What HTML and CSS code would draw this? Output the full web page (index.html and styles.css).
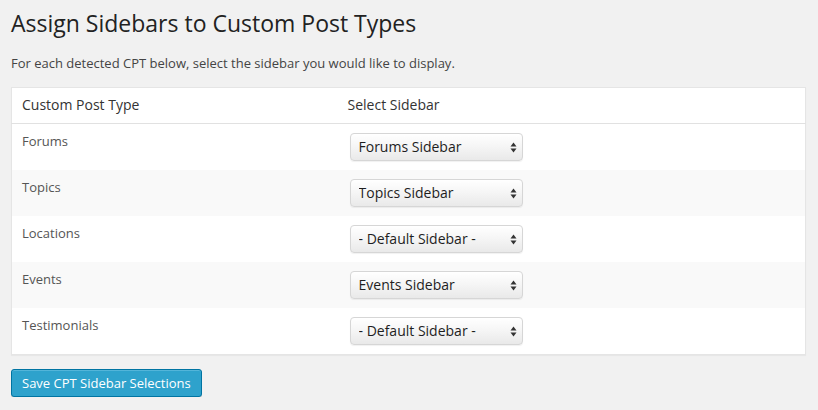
FILE: index.html
```html
<!DOCTYPE html>
<html>
<head>
<meta charset="utf-8">
<link rel="stylesheet" href="styles.css">
</head>
<body>
<div class="wrap">
  <h1 class="title">Assign Sidebars to Custom Post Types</h1>
  <p class="intro">For each detected CPT below, select the sidebar you would like to display.</p>
  <table class="widefat">
    <colgroup><col class="col-type"><col class="col-select"></colgroup>
    <thead>
      <tr><th>Custom Post Type</th><th>Select Sidebar</th></tr>
    </thead>
    <tbody>
      <tr>
        <td>Forums</td>
        <td><span class="sel"><select><option>Forums Sidebar</option></select><svg class="arrows" width="7" height="11" viewBox="0 0 7 11"><path d="M3.5 0.5 L6.5 4.5 L0.5 4.5 Z M0.5 6.5 L6.5 6.5 L3.5 10.5 Z" fill="#333"/></svg></span></td>
      </tr>
      <tr class="alt">
        <td>Topics</td>
        <td><span class="sel"><select><option>Topics Sidebar</option></select><svg class="arrows" width="7" height="11" viewBox="0 0 7 11"><path d="M3.5 0.5 L6.5 4.5 L0.5 4.5 Z M0.5 6.5 L6.5 6.5 L3.5 10.5 Z" fill="#333"/></svg></span></td>
      </tr>
      <tr>
        <td>Locations</td>
        <td><span class="sel"><select><option>- Default Sidebar -</option></select><svg class="arrows" width="7" height="11" viewBox="0 0 7 11"><path d="M3.5 0.5 L6.5 4.5 L0.5 4.5 Z M0.5 6.5 L6.5 6.5 L3.5 10.5 Z" fill="#333"/></svg></span></td>
      </tr>
      <tr class="alt">
        <td>Events</td>
        <td><span class="sel"><select><option>Events Sidebar</option></select><svg class="arrows" width="7" height="11" viewBox="0 0 7 11"><path d="M3.5 0.5 L6.5 4.5 L0.5 4.5 Z M0.5 6.5 L6.5 6.5 L3.5 10.5 Z" fill="#333"/></svg></span></td>
      </tr>
      <tr>
        <td>Testimonials</td>
        <td><span class="sel"><select><option>- Default Sidebar -</option></select><svg class="arrows" width="7" height="11" viewBox="0 0 7 11"><path d="M3.5 0.5 L6.5 4.5 L0.5 4.5 Z M0.5 6.5 L6.5 6.5 L3.5 10.5 Z" fill="#333"/></svg></span></td>
      </tr>
    </tbody>
  </table>
  <div class="actions"><button class="button-primary" type="button">Save CPT Sidebar Selections</button></div>
</div>
</body>
</html>
```
FILE: styles.css
```css
html, body {
  margin: 0;
  padding: 0;
  background: #f1f1f1;
}
body {
  font-family: "Open Sans", "Liberation Sans", sans-serif;
  font-size: 13px;
  color: #444;
  line-height: 1.4em;
}
.wrap {
  padding: 7px 12px 0 11px;
}
.title {
  margin: 0;
  font-size: 23px;
  font-weight: 400;
  line-height: 29px;
  color: #222;
  padding: 2px 0 0;
}
.intro {
  margin: 16px 0 0;
  font-size: 13px;
  line-height: 1.5;
  color: #444;
}
.widefat {
  margin-top: 13px;
  width: 795px;
  border-collapse: collapse;
  border-spacing: 0;
  table-layout: fixed;
  background: #fff;
  border: 1px solid #e5e5e5;
  box-shadow: 0 1px 1px rgba(0,0,0,0.04);
}
.col-type { width: 326px; }
.widefat th {
  text-align: left;
  font-weight: 400;
  font-size: 14px;
  line-height: 20px;
  color: #333;
  padding: 7px 10px 8px;
  border-bottom: 1px solid #e1e1e1;
}
.widefat td {
  vertical-align: top;
  padding: 8px 10px 9px;
  line-height: 19px;
  font-size: 13px;
  color: #555;
}
.widefat tr.alt td {
  background: #f9f9f9;
}
.sel {
  position: relative;
  display: inline-block;
  margin: 1px 0 0 2px;
  vertical-align: top;
}
.sel select {
  -webkit-appearance: none;
  appearance: none;
  display: block;
  width: 173px;
  height: 28px;
  margin: 0;
  padding: 0 20px 0 8px;
  font-family: "Open Sans", "Liberation Sans", sans-serif;
  font-size: 14px;
  color: #1e1e1e;
  border: 1px solid #d6d6d6;
  border-radius: 4px;
  background: linear-gradient(to bottom, #ffffff 0%, #f6f6f6 45%, #e9e9e9 100%);
  box-shadow: inset 0 1px 0 #fff, 0 1px 1px rgba(0,0,0,0.06);
  outline: none;
}
.arrows {
  position: absolute;
  right: 6px;
  top: 9px;
  pointer-events: none;
}
.actions {
  padding-top: 14px;
}
.button-primary {
  height: 28px;
  padding: 0 10px 1px;
  font-family: "Open Sans", "Liberation Sans", sans-serif;
  font-size: 13px;
  line-height: 26px;
  color: #fff;
  background: #2ea2cc;
  border: 1px solid #0074a2;
  border-radius: 3px;
  box-shadow: inset 0 1px 0 rgba(120,200,230,0.5), 0 1px 0 rgba(0,0,0,0.15);
  cursor: pointer;
}
```
